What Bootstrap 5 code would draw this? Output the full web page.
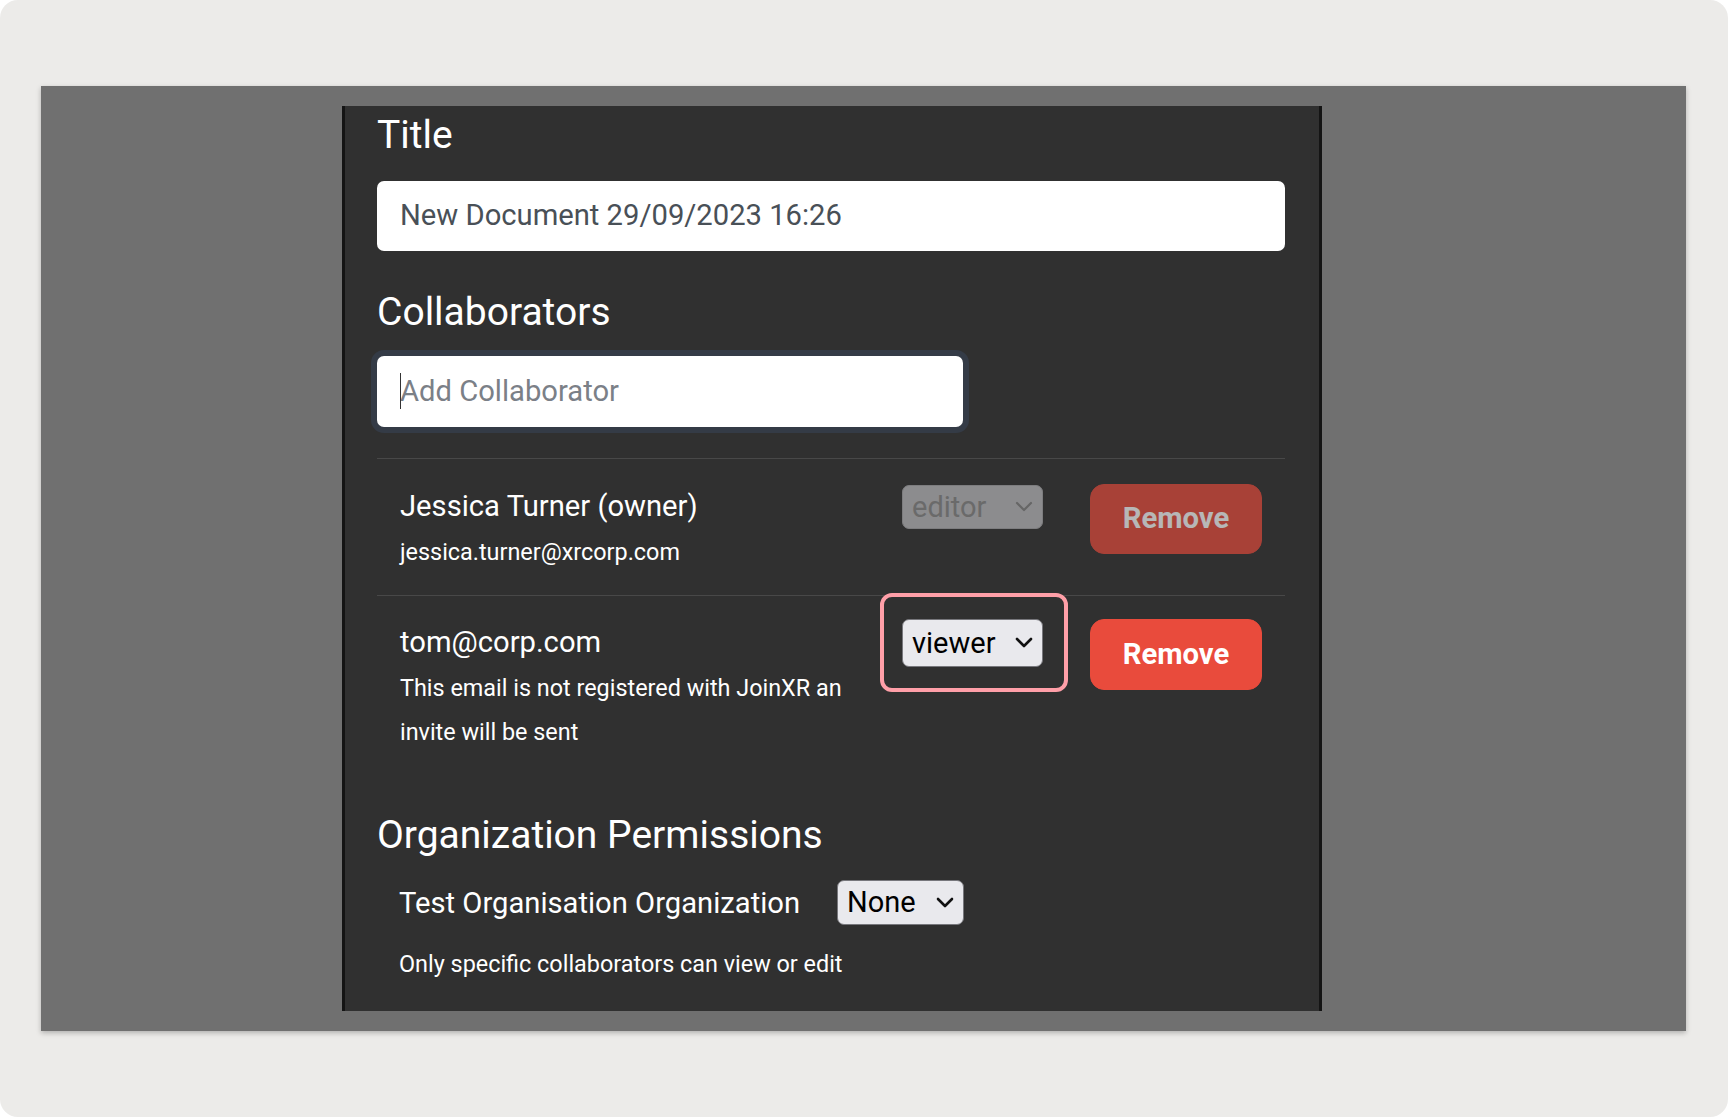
<!DOCTYPE html>
<html lang="en">
  <head>
    <meta charset="UTF-8" />
    <meta name="viewport" content="width=device-width, initial-scale=1.0" />
    <title>Document settings</title>
    <link
      href="https://cdn.jsdelivr.net/npm/bootstrap@5.3.2/dist/css/bootstrap.min.css"
      rel="stylesheet"
    />
    <style>
      body {
        background: #fff;
        font-family: Roboto, "Liberation Sans", sans-serif;
        overflow: hidden;
      }
      .frame {
        height: 1117px;
        background: #ecebe9;
        border-radius: 18px;
        padding: 86px 42px 86px 41px;
      }
      .backdrop {
        height: 945px;
        background: #707070;
        padding: 20px 0 20px 301px;
        box-shadow: 0 2px 5px rgba(0, 0, 0, 0.25);
      }
      .panel {
        width: 980px;
        height: 905px;
        background: #303030;
        color: #fff;
        border-left: 3px solid #141414;
        border-right: 3px solid #141414;
        padding: 1px 34px 0 32px;
      }
      .panel h5 {
        font-size: 39px;
        font-weight: 400;
        line-height: 56px;
        margin: 0;
      }
      .panel h5.head-collab {
        margin-top: 33px;
      }
      .panel h5.head-org {
        margin-top: 53px;
      }
      .panel .form-control {
        height: 70px;
        font-size: 29.2px;
        padding: 0 23px 2px;
        border: 0;
        border-radius: 7px;
        color: #495057;
      }
      .title-input {
        margin-top: 18px;
      }
      .panel .form-control::placeholder {
        color: #7b8087;
      }
      .add-wrap {
        width: 586px;
        margin-top: 16px;
      }
      .add-wrap .form-control {
        height: 71px;
        box-shadow: 0 0 0 6px #343b46;
      }
      .caret {
        position: absolute;
        left: 23px;
        top: 17px;
        width: 1px;
        height: 36px;
        background: #333;
      }
      .collab {
        border-top: 1px solid #484848;
        padding: 25px 23px 0;
      }
      .collab.first {
        margin-top: 31px;
        padding-bottom: 21px;
      }
      .collab.first .role-col {
        padding-top: 1px;
      }
      .collab.second {
        padding-top: 23px;
      }
      .collab.second .name {
        margin-top: 1px;
      }
      .collab .name {
        font-size: 29.2px;
        line-height: 44px;
      }
      .collab .note {
        font-size: 23.4px;
        line-height: 44px;
        margin-top: 2px;
      }
      .role-col {
        width: 141px;
        flex: none;
      }
      .panel .form-select {
        font-size: 29px;
        line-height: 1;
        height: 48px;
        padding: 0 30px 0 9px;
        color: #000;
        background-color: #e9e9ed;
        background-position: right 7px center;
        background-size: 22px 16px;
        background-image: url("data:image/svg+xml,%3csvg xmlns='http://www.w3.org/2000/svg' viewBox='0 0 22 16'%3e%3cpath fill='none' stroke='%23111' stroke-width='2.6' stroke-linecap='round' stroke-linejoin='round' d='M4 4l7 7 7-7'/%3e%3c/svg%3e");
        border: 1px solid #77777c;
        border-radius: 7px;
      }
      .panel .form-select:disabled {
        height: 44px;
        color: #6a6a6a;
        background-color: #8c8c8e;
        border-color: #7d7d7f;
        background-image: url("data:image/svg+xml,%3csvg xmlns='http://www.w3.org/2000/svg' viewBox='0 0 22 16'%3e%3cpath fill='none' stroke='%23666' stroke-width='2.2' stroke-linecap='round' stroke-linejoin='round' d='M4 4l7 7 7-7'/%3e%3c/svg%3e");
      }
      .btn-remove {
        --bs-btn-bg: #e94b3c;
        --bs-btn-border-color: #e94b3c;
        --bs-btn-disabled-bg: #e94b3c;
        --bs-btn-disabled-border-color: #e94b3c;
        --bs-btn-disabled-color: #fff;
        --bs-btn-color: #fff;
        width: 172px;
        height: 71px;
        flex: none;
        margin-left: 47px;
        font-size: 29.2px;
        font-weight: 700;
        padding: 0;
        border-radius: 14px;
      }
      .btn-remove:disabled {
        height: 70px;
      }
      .highlight {
        position: absolute;
        left: -22px;
        top: -26px;
        width: 188px;
        height: 99px;
        border: 4px solid #ff9fa8;
        border-radius: 12px;
        pointer-events: none;
      }
      .org-row {
        margin-top: 17px;
        padding-left: 22px;
        width: 587px;
      }
      .org-row .name {
        font-size: 29.2px;
        padding-top: 2px;
      }
      .org-row .form-select {
        width: 127px;
        height: 45px !important;
      }
      .org-note {
        font-size: 23.4px;
        padding-left: 22px;
        margin-top: 21px;
      }
    </style>
  </head>
  <body>
    <div class="frame">
      <div class="backdrop">
        <div class="panel">
          <h5>Title</h5>
          <input
            type="text"
            class="form-control title-input"
            value="New Document 29/09/2023 16:26"
          />

          <h5 class="head-collab">Collaborators</h5>
          <div class="add-wrap position-relative">
            <input
              type="text"
              class="form-control"
              placeholder="Add Collaborator"
            />
            <span class="caret"></span>
          </div>

          <div class="collab first d-flex">
            <div class="flex-grow-1">
              <div class="name">Jessica Turner (owner)</div>
              <div class="note">jessica.turner@xrcorp.com</div>
            </div>
            <div class="role-col">
              <select class="form-select" disabled>
                <option>editor</option>
              </select>
            </div>
            <button class="btn btn-remove" disabled>Remove</button>
          </div>

          <div class="collab second d-flex">
            <div class="flex-grow-1">
              <div class="name">tom@corp.com</div>
              <div class="note">
                This email is not registered with JoinXR an<br />invite will be
                sent
              </div>
            </div>
            <div class="role-col position-relative">
              <select class="form-select">
                <option>viewer</option>
              </select>
              <span class="highlight"></span>
            </div>
            <button class="btn btn-remove">Remove</button>
          </div>

          <h5 class="head-org">Organization Permissions</h5>
          <div class="org-row d-flex align-items-center justify-content-between">
            <span class="name">Test Organisation Organization</span>
            <select class="form-select">
              <option>None</option>
            </select>
          </div>
          <div class="org-note">Only specific collaborators can view or edit</div>
        </div>
      </div>
    </div>
    <script src="https://cdn.jsdelivr.net/npm/bootstrap@5.3.2/dist/js/bootstrap.bundle.min.js"></script>
  </body>
</html>
